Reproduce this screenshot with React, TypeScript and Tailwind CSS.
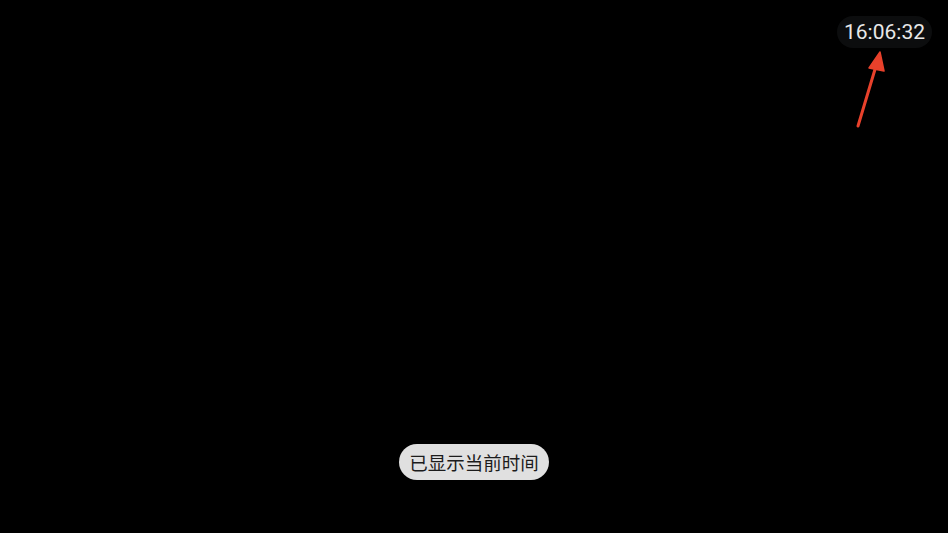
import React from "react";

export default function App() {
  return (
    <div className="relative flex h-[533px] w-[948px] flex-col overflow-hidden bg-black" style={{ fontFamily: "Roboto, 'Noto Sans CJK SC', sans-serif" }}>
      <div className="flex justify-end pr-[16px] pt-[16px]">
        <div className="flex h-[32px] w-[95px] items-center justify-center rounded-full bg-[#0c0d0e] pt-[1px] text-[21px] leading-none text-[#e8e8e8]">
          16:06:32
        </div>
      </div>
      <div className="flex-1" />
      <div className="flex justify-center pb-[53px]">
        <div className="flex h-[36px] items-center rounded-full bg-[#e0e0e0] px-[10px] text-[18.5px] leading-none text-[#1c1c1c]" style={{ fontFamily: "'Noto Sans CJK SC', sans-serif" }}>
          已显示当前时间
        </div>
      </div>
      <svg className="absolute left-0 top-0" width="948" height="533" viewBox="0 0 948 533">
        <line x1="858" y1="126" x2="876" y2="66" stroke="#e8412b" strokeWidth="3" strokeLinecap="round" />
        <polygon points="880,52 869,68 884,71" fill="#e8412b" stroke="#e8412b" strokeWidth="1.5" strokeLinejoin="round" />
      </svg>
    </div>
  );
}
